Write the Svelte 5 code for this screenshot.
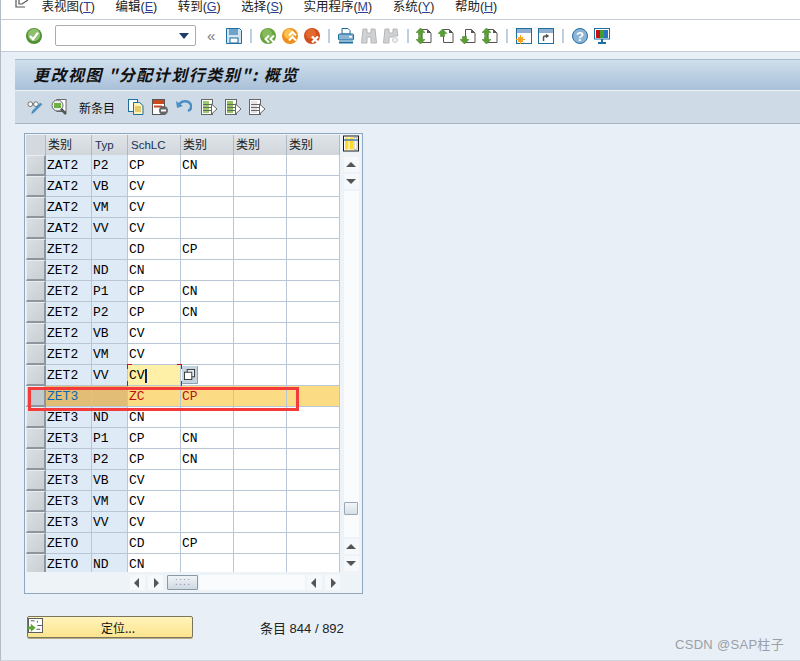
<script>
  const menus = [['表视图','T'],['编辑','E'],['转到','G'],['选择','S'],['实用程序','M'],['系统','Y'],['帮助','H']];
  const rows = [
    ['ZAT2','P2','CP','CN'],['ZAT2','VB','CV',''],['ZAT2','VM','CV',''],['ZAT2','VV','CV',''],
    ['ZET2','','CD','CP'],['ZET2','ND','CN',''],['ZET2','P1','CP','CN'],['ZET2','P2','CP','CN'],
    ['ZET2','VB','CV',''],['ZET2','VM','CV',''],['ZET2','VV','CV',''],['ZET3','','ZC','CP'],
    ['ZET3','ND','CN',''],['ZET3','P1','CP','CN'],['ZET3','P2','CP','CN'],['ZET3','VB','CV',''],
    ['ZET3','VM','CV',''],['ZET3','VV','CV',''],['ZETO','','CD','CP'],['ZETO','ND','CN','']
  ];
  const heads = ['类别','Typ','SchLC','类别','类别','类别'];
</script>

{#snippet page(kind)}
  <svg class="ic" viewBox="0 0 16 16">
    <path d="M5.500 1.500h6l3.500 3.500v9.500H5.500z" fill="#fff" stroke="#555" stroke-width="1"/>
    <path d="M11 1.500l4 3.500H11z" fill="#555"/>
    {#if kind === 'up' || kind === 'both'}
      <path d="M4.500 {kind==='both'?0:1}l4.500 4.500H6.500v3h-4v-3H0z" fill="#5b9e33" stroke="#3f7a22" stroke-width=".5"/>
    {/if}
    {#if kind === 'down' || kind === 'both'}
      <path d="M4.500 16l4.500-4.500H6.500v-3h-4v3H0z" fill="#5b9e33" stroke="#3f7a22" stroke-width=".5"/>
    {/if}
  </svg>
{/snippet}

{#snippet rowdoc(color)}
  <svg class="ic" viewBox="0 0 16 16">
    <rect x=".5" y=".5" width="11" height="15" fill="#fff" stroke="#666"/>
    <rect x="2" y="2" width="6" height="12" fill={color}/>
    <path d="M2 5.500h8M2 8.500h8M2 11.500h8" stroke="#666"/>
    <path d="M10.500 5l5.500 5-5.500 5z" fill="#fff" stroke="#666"/>
  </svg>
{/snippet}

<div class="screen">
  <header class="menubar">
    <svg class="menuicon" viewBox="0 0 16 10"><path d="M1 0v7h9M4 0v4h3l6-4" fill="none" stroke="#555" stroke-width="1.200"/></svg>
    {#each menus as [label, key]}
      <span class="menu">{label}(<u>{key}</u>)</span>
    {/each}
  </header>

  <div class="toolbar">
    <svg class="ic" viewBox="0 0 16 16"><circle cx="8" cy="8" r="8" fill="#4f8f35"/><circle cx="8" cy="7" r="6.200" fill="#8cc06a"/><path d="M4 8l3 3.200 5-6.500" fill="none" stroke="#fff" stroke-width="2.200"/></svg>
    <div class="combo"><svg viewBox="0 0 10 6" class="caret"><path d="M0 0h10L5 6z" fill="#1d3c6e"/></svg></div>
    <span class="chev">«</span>
    <svg class="ic" viewBox="0 0 16 16"><path d="M.5.500h13l2 2v13H.5z" fill="#d4e3f0" stroke="#1d6f9f"/><rect x="3" y="1" width="9" height="6" fill="#6fa3c8"/><rect x="4" y="10" width="8" height="5" fill="#fff" stroke="#1d6f9f"/></svg>
    <i class="sep"></i>
    <svg class="ic" viewBox="0 0 16 16"><circle cx="8" cy="8" r="8" fill="#69a53f"/><circle cx="7" cy="6" r="5" fill="#86bb5c"/><path d="M9 7.500L5.500 11 9 14.500M14 7.500L10.500 11l3.500 3.500" fill="none" stroke="#fff" stroke-width="2"/></svg>
    <svg class="ic g6" viewBox="0 0 16 16"><circle cx="8" cy="8" r="8" fill="#ee8f1d"/><circle cx="7" cy="6" r="5" fill="#fbc24f"/><path d="M7 7.500L10.500 4 14 7.500M7 12.500L10.500 9l3.500 3.500" fill="none" stroke="#fff" stroke-width="2"/></svg>
    <svg class="ic g6" viewBox="0 0 16 16"><circle cx="8" cy="8" r="8" fill="#cf4f1d"/><circle cx="7" cy="6" r="5" fill="#e26a30"/><path d="M8 8.500l6 6M14 8.500l-6 6" stroke="#fff" stroke-width="2.400"/></svg>
    <i class="sep"></i>
    <svg class="ic" viewBox="0 0 16 16"><path d="M4 .500h6l2 2V6H4z" fill="#fff" stroke="#1d6f9f"/><rect x=".5" y="6" width="15" height="6" rx="1" fill="#8cb4d2" stroke="#1d6f9f"/><rect x="11" y="8" width="3" height="1.500" fill="#fff"/><rect x="1" y="13.500" width="14" height="2" fill="#1d6f9f"/></svg>
    <svg class="ic g7" viewBox="0 0 16 16"><path d="M2 1h4v4h4V1h4l1.500 14H10V9H6v6H.5z" fill="#cfd1d3" stroke="#b4b6b8"/></svg>
    <svg class="ic g6" viewBox="0 0 16 16"><path d="M2 1h4v4h4V1h4l.8 7H10V9H6v6H.5z" fill="#cfd1d3" stroke="#b4b6b8"/><path d="M12 9v6M9 12h6" stroke="#cfd1d3" stroke-width="3"/><path d="M12 10v4M10 12h4" stroke="#fff"/></svg>
    <i class="sep tight"></i>
    {@render page('both')}
    <span class="g6 one">{@render page('up')}</span>
    <span class="g6">{@render page('down')}</span>
    <span class="g6">{@render page('both')}</span>
    <i class="sep"></i>
    <svg class="ic" viewBox="0 0 16 16"><rect x=".5" y=".5" width="15" height="15" fill="#fff" stroke="#1d6f9f"/><rect x="1" y="1" width="14" height="4" fill="#8fb0d0"/><circle cx="4.500" cy="11.500" r="2.600" fill="#f6a21b"/><path d="M4.500 7v9M0 11.500h9M1.500 8.500l6 6M7.500 8.500l-6 6" stroke="#f6a21b"/></svg>
    <svg class="ic g6" viewBox="0 0 16 16"><rect x=".5" y=".5" width="15" height="15" fill="#fff" stroke="#1d6f9f"/><rect x="1" y="1" width="14" height="4" fill="#8fb0d0"/><path d="M5.500 13V9.500c0-1.200.8-1.500 2-1.500h2M8 6.500l2 1.500-2 1.500" fill="none" stroke="#555" stroke-width="1.500"/></svg>
    <i class="sep"></i>
    <svg class="ic" viewBox="0 0 16 16"><circle cx="8" cy="8" r="7.500" fill="#8db4d6" stroke="#1d6f9f"/><text x="8" y="12.500" class="q">?</text></svg>
    <svg class="ic g6" viewBox="0 0 16 16"><rect x=".5" y=".5" width="15" height="10.500" fill="#fff" stroke="#1d6f9f"/><rect x="2" y="2" width="4" height="8" fill="#c80f12"/><rect x="6" y="2" width="4" height="8" fill="#3f9e2f"/><rect x="10" y="2" width="4" height="8" fill="#2874c0"/><path d="M8 11v3M4 15h8" stroke="#1d6f9f" stroke-width="2"/></svg>
  </div>

  <main class="content">
    <div class="panel">
      <h1 class="title">更改视图 "分配计划行类别": 概览</h1>
      <div class="apptools">
        <svg class="ic" viewBox="0 0 17 16"><circle cx="3.500" cy="5" r="2.500" fill="#fff" stroke="#666"/><circle cx="9.500" cy="5" r="2.500" fill="#fff" stroke="#666"/><path d="M6 5h1" stroke="#666"/><path d="M16 5l-9 9-2 1 1-3 8-8z" fill="#4a95c8" stroke="#2e6f9c" stroke-width=".5"/></svg>
        <svg class="ic a8" viewBox="0 0 16 16"><rect x="6" y=".5" width="9" height="12" fill="#fff" stroke="#666"/><circle cx="6.500" cy="6.500" r="5.500" fill="#e8eef2" stroke="#666"/><rect x="3" y="4" width="7" height="5" fill="#6fb03f"/><path d="M10 10l5 5" stroke="#555" stroke-width="2.500"/></svg>
        <span class="newentry">新条目</span>
        <svg class="ic" viewBox="0 0 16 16"><rect x=".5" y=".5" width="9" height="12" fill="#fff" stroke="#1d6f9f"/><path d="M5.500 3.500h6l3.500 3v9H5.500z" fill="#fff3b8" stroke="#1d6f9f"/><path d="M7 8h6M7 10h6M7 12h6" stroke="#c9a227"/></svg>
        <svg class="ic a8" viewBox="0 0 16 16"><rect x=".5" y=".5" width="12" height="15" fill="#fff" stroke="#555"/><rect x="1" y="1" width="11" height="4" fill="#c94a1f"/><path d="M2 7.500h8" stroke="#c94a1f" stroke-width="2"/><circle cx="11.500" cy="11.500" r="4.500" fill="#666"/><path d="M9 11.500h5" stroke="#fff" stroke-width="2"/></svg>
        <svg class="ic a8" viewBox="0 0 16 16"><path d="M3 6c2-5 10-5 12 0 .8 3-1 5-3 6" fill="none" stroke="#4a8fc4" stroke-width="2.500"/><path d="M0 2l1 7 6-2z" fill="#4a8fc4"/></svg>
        <span class="a9">{@render rowdoc('#9ccb6f')}</span>
        <span class="a8">{@render rowdoc('#8fc25c')}</span>
        <span class="a8">{@render rowdoc('#e4e4e4')}</span>
      </div>
    </div>

    <section class="tablebox">
      <div class="tablemain">
        <div class="grid">
          <div class="hcell sel"></div>
          {#each heads as h, i}<div class="hcell" class:lat={i === 1 || i === 2}>{h}</div>{/each}
          {#each rows as r, i}
            <div class="rowsel" class:hlsel={i === 11}></div>
            <div class="cell key" class:hlkey={i === 11} class:hlfirst={i === 11}>{r[0]}</div>
            <div class="cell key" class:hlkey={i === 11}>{r[1]}</div>
            {#if i === 10}
              <div class="cell input">{r[2]}<i class="cursor"></i><i class="corner bl"></i><i class="corner br"></i><i class="f4"><svg viewBox="0 0 12 12"><rect x="3.500" y=".5" width="8" height="8" fill="#e8eef4" stroke="#333"/><rect x=".5" y="3.500" width="8" height="8" fill="#fff" stroke="#333"/></svg></i></div>
            {:else}
              <div class="cell" class:hl={i === 11}>{r[2]}</div>
            {/if}
            <div class="cell" class:hl={i === 11}>{r[3]}</div>
            <div class="cell" class:hl={i === 11}></div>
            <div class="cell" class:hl={i === 11}></div>
          {/each}
        </div>
        <div class="vscroll">
          <div class="settings"><svg viewBox="0 0 16 16"><rect x=".5" y=".5" width="15" height="15" fill="#fff" stroke="#1a1a1a"/><rect x="2" y="2" width="3.500" height="12" fill="#ffd92e"/><rect x="6.500" y="2" width="3.500" height="12" fill="#ffd92e"/><rect x="11" y="2" width="3" height="12" fill="#fff" stroke="#777" stroke-width=".5"/><path d="M1 4.500h14" stroke="#4a7fb0" stroke-width="1.500"/></svg></div>
          <div class="sb up"></div>
          <div class="sb down"></div>
          <div class="track"><div class="thumb"></div></div>
          <div class="sb up"></div>
          <div class="sb down"></div>
        </div>
      </div>
      <div class="hscroll">
        <div class="hb left"></div><div class="hb right"></div>
        <div class="hthumb">∷∷</div>
        <div class="htrack"></div>
        <div class="hb left"></div><div class="hb right"></div>
      </div>
    </section>

    <div class="footer">
      <button class="locate">
        <svg class="locicon" viewBox="0 0 16 16"><rect x=".5" y=".5" width="15" height="15" fill="#fff" stroke="#555"/><path d="M3 3h4M10 3v2M10 8h5M9 12h4" stroke="#555"/><path d="M0 9h3V6l5 4.500L3 15v-3H0z" fill="#5fa52f"/></svg>
        定位...
      </button>
      <span class="count">条目 844 / 892</span>
    </div>
  </main>

  <div class="redbox"></div>
  <div class="watermark">CSDN @SAP柱子</div>
</div>

<style>
  :global(body) { margin: 0; background: #e8eff6; }
  .screen {
    position: relative; width: 800px; height: 661px; overflow: hidden; box-sizing: border-box;
    display: flex; flex-direction: column;
    font-family: "Liberation Sans", "Noto Sans CJK SC", sans-serif; color: #111;
    background: #e8eff6; border-left: 1px solid #b4bcc6; border-bottom: 1px solid #d0d7df;
  }
  .menubar {
    height: 20px; box-sizing: border-box; background: #fff; border-bottom: 1px solid #c5ccd6;
    display: flex; align-items: flex-start; gap: 20.500px; padding-left: 14px; overflow: hidden;
    font-size: 12.500px; line-height: 15px;
  }
  .menuicon { width: 16px; height: 10px; margin-right: -10px; }
  .menu { white-space: nowrap; color: #222; }
  .menu u { color: #2a3f8f; }
  .toolbar {
    height: 32px; box-sizing: border-box; background: #fff; border-bottom: 1px solid #c5ccd6;
    display: flex; align-items: center; padding-left: 25px;
  }
  .ic { width: 16px; height: 16px; display: block; flex: none; }
  .combo {
    width: 141px; height: 21px; box-sizing: border-box; margin-left: 13px; background: #fff;
    border: 1px solid #a9acb0; border-radius: 2px; position: relative;
    display: flex; align-items: center; justify-content: flex-end; padding-right: 6px;
  }
  .caret { width: 10px; height: 6px; }
  .chev { width: 10px; margin: 0 9px 0 11px; color: #777; font-size: 15px; line-height: 16px; }
  .sep { width: 2px; height: 14px; background: #bcd0e2; margin: 0 8px 0 8px; flex: none; }
  .sep.tight { margin-right: 7px; }
  .g6 { margin-left: 6px; display: block; }
  .g7 { margin-left: 7px; display: block; }
  .q { font: bold 13px "Liberation Sans", sans-serif; fill: #fff; text-anchor: middle; }
  .content { flex: 1; padding: 7px 0 0 14px; }
  .panel { border-bottom: 1px solid #a6b6c6; }
  .title {
    margin: 0; height: 31px; box-sizing: border-box; padding: 0 0 0 18px;
    background: linear-gradient(#cfdfed, #a9c0d8);
    border-top: 1px solid #a9bacb;
    font: italic bold 16px/28px "Noto Sans CJK SC", sans-serif; letter-spacing: 1.500px; color: #111; white-space: nowrap;
  }
  .apptools {
    height: 33px; box-sizing: border-box; background: #cedbe6; border-top: 1px solid #eef3f8;
    display: flex; align-items: center; padding-left: 12px;
  }
  .a8 { margin-left: 8px; display: block; }
  .a9 { margin-left: 9px; display: block; }
  .newentry { font-size: 12px; margin: 0 14px 0 12px; width: 35px; white-space: nowrap; }
  .tablebox {
    width: 339px; height: 461px; box-sizing: border-box; margin: 9px 0 0 9px;
    border: 1px solid #8fa8c0; background: #eef3f8; padding: 1px;
  }
  .tablemain { display: flex; align-items: flex-start; }
  .grid {
    display: grid; grid-template-columns: 20px 46px 36px 53px 53px 53px 53px;
    grid-auto-rows: 21px; height: 437px; overflow: hidden; grid-template-rows: 20px;
    width: 314px;
  }
  .hcell {
    background: linear-gradient(#dfe4e8, #d0d6db); border-right: 1px solid #aeb9c4;
    font-size: 12px; line-height: 20px; padding-left: 2px; color: #222; box-sizing: border-box; white-space: nowrap;
  }
  .hcell.lat { font-size: 11.500px; padding-left: 3px; color: #1b2f55; }
  .sel { background: #d3d9de; padding: 0; }
  .rowsel {
    background: linear-gradient(135deg, #dadfe4, #c9ced3); box-sizing: border-box;
    border: 1px solid #e9edf0; border-right: 2px solid #8e959c; border-bottom: 2px solid #8e959c;
  }
  .cell {
    font: 13px/20px "Liberation Mono", "DejaVu Sans Mono", monospace; background: #fff; color: #000;
    border-right: 1px solid #b9c6d6; border-bottom: 1px solid #b9c6d6; box-sizing: border-box;
    padding: 1px 0 0 1px; white-space: nowrap; position: relative;
  }
  .key { background: #deeaf5; }
  .hl { background: #fbdb83; color: #b80f0f; }
  .hlkey { background: #e2bd76; }
  .hlfirst { color: #0a68b4; }
  .hlsel { background: #c2c9cf; }
  .input { background: #fff0a8; overflow: visible; z-index: 1; }
  .input::before, .input::after { content: ""; position: absolute; width: 4px; height: 4px; top: -1px; border-top: 1px solid #d01010; }
  .input::before { left: -1px; border-left: 1px solid #d01010; }
  .input::after { right: -2px; border-right: 1px solid #d01010; }
  .corner { position: absolute; width: 4px; height: 5px; bottom: -1px; }
  .corner.bl { left: -1px; border-left: 1px solid #d01010; }
  .corner.br { right: -2px; border-right: 1px solid #d01010; }
  .cursor { position: absolute; left: 17px; top: 4px; width: 2px; height: 14px; background: #12236e; }
  .f4 {
    position: absolute; left: 54px; top: 1px; width: 16px; height: 18px; box-sizing: border-box;
    background: #c6d4e2; border-right: 1px solid #8fa0b0; border-bottom: 1px solid #8fa0b0; border-radius: 1px;
    display: flex; align-items: center; justify-content: center;
  }
  .f4 svg { width: 11px; height: 11px; display: block; }
  .vscroll { width: 18px; height: 436px; margin-left: 2px; display: flex; flex-direction: column; align-items: center; gap: 2px; }
  .settings { height: 20px; flex: none; }
  .settings svg { width: 16px; height: 17px; display: block; }
  .sb { width: 15px; height: 15px; background: #f6f9fb; position: relative; flex: none; }
  .sb::after {
    content: ""; position: absolute; left: 2.500px; border-left: 5px solid transparent; border-right: 5px solid transparent;
  }
  .up::after { top: 5px; border-bottom: 5px solid #555; }
  .down::after { top: 5px; border-top: 5px solid #555; }
  .track { width: 15px; flex: 1; background: #f9fbfc; display: flex; flex-direction: column; padding-top: 311px; box-sizing: border-box; }
  .thumb { width: 14px; height: 13px; background: linear-gradient(#f2f6f9, #d5dfe8); border: 1px solid #9aa8b6; border-radius: 1px; box-sizing: border-box; margin-left: .5px; }
  .hscroll { display: flex; margin: 3px 0 0 104px; width: 210px; height: 15px; }
  .hb { width: 15px; height: 15px; background: #f6f9fb; position: relative; flex: none; margin-right: 3px; }
  .hb:last-child { margin-right: 0; }
  .hb::after { content: ""; position: absolute; top: 2.500px; border-top: 5px solid transparent; border-bottom: 5px solid transparent; }
  .left::after { left: 4px; border-right: 5px solid #555; }
  .right::after { left: 6px; border-left: 5px solid #555; }
  .hthumb {
    width: 31px; height: 15px; box-sizing: border-box; background: linear-gradient(#f0f4f7, #cfd9e3); margin: 0 1px;
    border: 1px solid #8b98a6; border-radius: 1px; font-size: 8px; line-height: 13px; text-align: center; color: #8b98a6; overflow: hidden;
  }
  .htrack { flex: 1; background: #fafbfc; margin-right: 2px; }
  .footer { display: flex; align-items: center; margin: 22px 0 0 12px; height: 22px; }
  .locate {
    width: 166px; height: 22px; padding: 0 0 0 16px; position: relative; box-sizing: border-box;
    background: linear-gradient(#fff3bb, #fde58e); border: 1px solid #7a7560; border-radius: 2px;
    font: 12px "Noto Sans CJK SC", sans-serif; color: #111; box-shadow: 0 1px 0 #b7ab7d;
  }
  .locicon { position: absolute; left: 0; top: 1px; width: 15px; height: 15px; display: block; }
  .count { margin-left: 67px; font-size: 13px; color: #222; white-space: nowrap; }
  .redbox {
    position: absolute; left: 27px; top: 387px; width: 271px; height: 24px; box-sizing: border-box;
    border: 3px solid #f43a3a; pointer-events: none;
  }
  .watermark {
    position: absolute; left: 674px; top: 637px; font-size: 13px; line-height: 16px; letter-spacing: .3px; color: #9aa0a6; white-space: nowrap;
  }
</style>
